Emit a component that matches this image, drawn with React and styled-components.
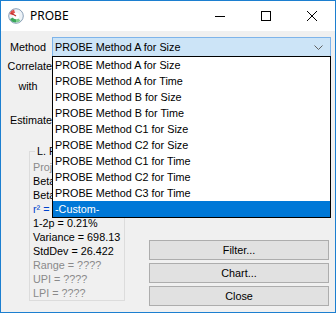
import React from 'react'
import styled, { createGlobalStyle } from 'styled-components'

const GlobalStyle = createGlobalStyle`
  html, body {
    margin: 0;
    padding: 0;
    overflow: hidden;
    background: #ffffff;
  }
`

const Window = styled.div`
  width: 336px;
  height: 313px;
  box-sizing: border-box;
  border: 1px solid #1c7fd0;
  display: flex;
  flex-direction: column;
  font-family: 'Liberation Sans', Arial, sans-serif;
  font-size: 10.8px;
  color: #000;
`

const TitleBar = styled.div`
  height: 30px;
  background: #fff;
  display: flex;
  align-items: center;
  flex-shrink: 0;
`

const AppIcon = styled.div`
  width: 16px;
  height: 16px;
  margin: 0 6px 0 7px;
  display: flex;
`

const Title = styled.div`
  flex: 1;
  font-family: 'Noto Sans', 'Open Sans', sans-serif;
  font-size: 12px;
  padding-bottom: 1px;
`

const CaptionButton = styled.div`
  width: 46px;
  height: 30px;
  display: flex;
  align-items: center;
  justify-content: center;
`

const Client = styled.div`
  flex: 1;
  background: #f0f0f0;
  padding: 6px 4px 0 3px;
  display: flex;
  flex-direction: column;
`

const TopRow = styled.div`
  display: flex;
  align-items: center;
  height: 20px;
`

const Label = styled.div`
  width: ${p => p.$w || 47}px;
  text-align: ${p => p.$align || 'right'};
  padding-right: ${p => p.$pr || 0}px;
  box-sizing: border-box;
  line-height: 16px;
  margin-top: ${p => p.$mt || 0}px;
  flex-shrink: 0;
`

const ComboWrap = styled.div`
  position: relative;
  flex: 1;
  height: 20px;
`

const Combo = styled.div`
  height: 20px;
  box-sizing: border-box;
  border: 1px solid #7eb4ea;
  background: #cce4f7;
  display: flex;
  align-items: center;
  padding: 0 7px 0 2px;
`

const ComboText = styled.div`
  flex: 1;
`

const DropList = styled.div`
  position: absolute;
  top: 19px;
  left: 0;
  right: 0;
  background: #fff;
  border: 1px solid #000;
  z-index: 10;
`

const DropItem = styled.div`
  height: 16px;
  line-height: 16px;
  padding-left: 2px;
  background: ${p => (p.$selected ? '#0078d7' : 'transparent')};
  color: ${p => (p.$selected ? '#fff' : '#000')};
`

const Body = styled.div`
  flex: 1;
  display: flex;
  margin-top: 1px;
`

const LeftCol = styled.div`
  width: 122px;
  display: flex;
  flex-direction: column;
`

const GroupBox = styled.fieldset`
  margin: 17px 0 0 25px;
  padding: 3px 0 0 3px;
  width: 96px;
  height: 156px;
  box-sizing: border-box;
  border: 1px solid #dcdcdc;
  overflow: hidden;
`

const Legend = styled.legend`
  padding: 0 2px;
  margin-left: 2px;
  line-height: 12px;
`

const Line = styled.div`
  line-height: 14px;
  white-space: nowrap;
  color: ${p => p.$c || '#000'};
`

const RightCol = styled.div`
  flex: 1;
  display: flex;
  flex-direction: column;
  justify-content: flex-end;
  gap: 3px;
  padding: 0 2px 6px 23px;
`

const Button = styled.div`
  height: 20px;
  box-sizing: border-box;
  border: 1px solid #adadad;
  background: #e1e1e1;
  display: flex;
  align-items: center;
  justify-content: center;
`

const items = [
  'PROBE Method A for Size',
  'PROBE Method A for Time',
  'PROBE Method B for Size',
  'PROBE Method B for Time',
  'PROBE Method C1 for Size',
  'PROBE Method C2 for Size',
  'PROBE Method C1 for Time',
  'PROBE Method C2 for Time',
  'PROBE Method C3 for Time',
  '-Custom-',
]

const Gauge = () => (
  <svg width="16" height="16" viewBox="0 0 16 16">
    <circle cx="8" cy="8" r="7.3" fill="#eef3f8" stroke="#8aa0b8" strokeWidth="1" />
    <path d="M8 8 L1.5 6 A6.6 6.6 0 0 1 6 1.6 Z" fill="#e0504a" />
    <path d="M8 8 L2 11 A6.6 6.6 0 0 0 8 14.6 Z" fill="#3aa65a" />
    <path d="M8 8 L8 14.6 A6.6 6.6 0 0 0 12.5 12.8 Z" fill="#7fcf8e" />
    <circle cx="8" cy="8" r="3.2" fill="#fff" />
    <line x1="8" y1="8" x2="3" y2="5" stroke="#c03030" strokeWidth="1.2" />
  </svg>
)

export default function App() {
  return (
    <>
      <GlobalStyle />
      <Window>
        <TitleBar>
          <AppIcon>
            <Gauge />
          </AppIcon>
          <Title>PROBE</Title>
          <CaptionButton>
            <svg width="10" height="10" viewBox="0 0 10 10">
              <line x1="0" y1="5.5" x2="10" y2="5.5" stroke="#000" strokeWidth="1" />
            </svg>
          </CaptionButton>
          <CaptionButton>
            <svg width="10" height="10" viewBox="0 0 10 10">
              <rect x="0.5" y="0.5" width="9" height="9" fill="none" stroke="#000" strokeWidth="1" />
            </svg>
          </CaptionButton>
          <CaptionButton>
            <svg width="10" height="10" viewBox="0 0 10 10">
              <path d="M0 0 L10 10 M10 0 L0 10" stroke="#000" strokeWidth="1" />
            </svg>
          </CaptionButton>
        </TitleBar>
        <Client>
          <TopRow>
            <Label $w={48} $pr={6}>Method</Label>
            <ComboWrap>
              <Combo>
                <ComboText>PROBE Method A for Size</ComboText>
                <svg width="9" height="5" viewBox="0 0 9 5">
                  <path d="M0.5 0.5 L4.5 4.5 L8.5 0.5" fill="none" stroke="#606060" strokeWidth="1" />
                </svg>
              </Combo>
              <DropList>
                {items.map((t, i) => (
                  <DropItem key={t} $selected={i === items.length - 1}>
                    {t}
                  </DropItem>
                ))}
              </DropList>
            </ComboWrap>
          </TopRow>
          <Body>
            <LeftCol>
              <Label $w={48}>Correlate</Label>
              <Label $w={48} $align="center" $mt={4}>with</Label>
              <Label $w={48} $mt={18}>Estimate</Label>
              <GroupBox>
                <Legend>L. Regression</Legend>
                <Line $c="#8a8a8a">Projected = ????</Line>
                <Line>Beta0 = 12.34</Line>
                <Line>Beta1 = 0.978</Line>
                <Line $c="#0044cc">r² = 0.995</Line>
                <Line>1-2p = 0.21%</Line>
                <Line>Variance = 698.13</Line>
                <Line>StdDev = 26.422</Line>
                <Line $c="#8a8a8a">Range = ????</Line>
                <Line $c="#8a8a8a">UPI = ????</Line>
                <Line $c="#8a8a8a">LPI = ????</Line>
              </GroupBox>
            </LeftCol>
            <RightCol>
              <Button>Filter...</Button>
              <Button>Chart...</Button>
              <Button>Close</Button>
            </RightCol>
          </Body>
        </Client>
      </Window>
    </>
  )
}
